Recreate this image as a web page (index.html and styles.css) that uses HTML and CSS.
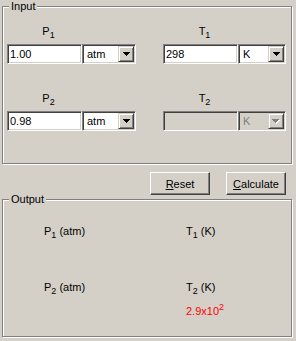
FILE: index.html
```html
<!DOCTYPE html>
<html lang="en">
<head>
    <meta charset="UTF-8">
    <meta name="viewport" content="width=device-width, initial-scale=1.0">
    <title>Gas Law</title>
    <link rel="stylesheet" href="styles.css">
</head>
<body>
    <div class="window">
        <fieldset class="group">
            <legend>Input</legend>
            <div class="input-grid">
                <div class="cell">
                    <div class="label">P<sub>1</sub></div>
                    <div class="controls">
                        <input class="edit" type="text" value="1.00">
                        <div class="combo"><span class="combo-text">atm</span><span class="drop"><svg width="7" height="4" viewBox="0 0 7 4"><path d="M0 0h7v1H0zM1 1h5v1H1zM2 2h3v1H2zM3 3h1v1H3z"/></svg></span></div>
                    </div>
                </div>
                <div class="cell">
                    <div class="label">T<sub>1</sub></div>
                    <div class="controls">
                        <input class="edit" type="text" value="298">
                        <div class="combo narrow"><span class="combo-text">K</span><span class="drop"><svg width="7" height="4" viewBox="0 0 7 4"><path d="M0 0h7v1H0zM1 1h5v1H1zM2 2h3v1H2zM3 3h1v1H3z"/></svg></span></div>
                    </div>
                </div>
                <div class="cell">
                    <div class="label">P<sub>2</sub></div>
                    <div class="controls">
                        <input class="edit" type="text" value="0.98">
                        <div class="combo"><span class="combo-text">atm</span><span class="drop"><svg width="7" height="4" viewBox="0 0 7 4"><path d="M0 0h7v1H0zM1 1h5v1H1zM2 2h3v1H2zM3 3h1v1H3z"/></svg></span></div>
                    </div>
                </div>
                <div class="cell">
                    <div class="label">T<sub>2</sub></div>
                    <div class="controls">
                        <input class="edit disabled" type="text" value="" disabled>
                        <div class="combo narrow disabled"><span class="combo-text">K</span><span class="drop"><svg width="8" height="5" viewBox="0 0 8 5"><path class="shade" d="M1 1h7v1H1zM2 2h5v1H2zM3 3h3v1H3zM4 4h1v1H4z"/><path d="M0 0h7v1H0zM1 1h5v1H1zM2 2h3v1H2zM3 3h1v1H3z"/></svg></span></div>
                    </div>
                </div>
            </div>
        </fieldset>

        <div class="buttons">
            <button class="btn"><u>R</u>eset</button>
            <button class="btn"><u>C</u>alculate</button>
        </div>

        <fieldset class="group">
            <legend>Output</legend>
            <div class="output">
                <div class="out-row">
                    <div class="out-col">P<sub>1</sub> (atm)</div>
                    <div class="out-col">T<sub>1</sub> (K)</div>
                </div>
                <div class="out-row">
                    <div class="out-col">P<sub>2</sub> (atm)</div>
                    <div class="out-col">
                        T<sub>2</sub> (K)
                        <div class="result">2.9x10<sup>2</sup></div>
                    </div>
                </div>
            </div>
        </fieldset>
    </div>
</body>
</html>
```

FILE: styles.css
```css
body {
    margin: 0;
    background-color: #d4d0c8;
    font-family: "Liberation Sans", Arial, sans-serif;
    font-size: 11px;
    line-height: 13px;
    color: #000;
}

.window {
    width: 296px;
    height: 341px;
    padding-left: 2px;
    box-sizing: border-box;
    overflow: hidden;
}

/* group boxes */
.group {
    width: 290px;
    margin: 0;
    padding: 0;
    min-width: 0;
    box-sizing: border-box;
    border: 1px solid #808080;
    box-shadow: inset 1px 1px 0 #fff, 1px 1px 0 #fff;
}

.group legend {
    margin-left: 6px;
    padding: 0 2px;
    line-height: 13px;
    background-color: #d4d0c8;
}

.input-grid {
    display: grid;
    grid-template-columns: 156px 1fr;
    row-gap: 28px;
    padding: 12px 0 32px 4px;
}

.cell {
    display: flex;
    flex-direction: column;
}

.label {
    width: 75px;
    padding-left: 8px;
    box-sizing: border-box;
    text-align: center;
    margin-bottom: 6px;
}

sub {
    font-size: 9px;
    line-height: 0;
    vertical-align: -3px;
}

sup {
    font-size: 9px;
    line-height: 0;
    vertical-align: 5px;
}

.controls {
    display: flex;
}

/* sunken fields */
.edit, .combo {
    height: 20px;
    box-sizing: border-box;
    border: 1px solid;
    border-color: #808080 #fff #fff #808080;
    box-shadow: inset 1px 1px 0 #404040, inset -1px -1px 0 #d4d0c8;
    background-color: #fff;
    font-family: inherit;
    font-size: 11px;
    color: #000;
}

.edit {
    width: 75px;
    margin: 0;
    padding: 0 2px;
    outline: none;
}

.edit.disabled {
    background-color: #d4d0c8;
}

.combo {
    width: 54px;
    padding: 1px;
    display: flex;
    align-items: center;
}

.combo.narrow {
    width: 48px;
}

.combo-text {
    flex: 1;
    padding-left: 3px;
}

.drop {
    width: 16px;
    height: 16px;
    box-sizing: border-box;
    border: 1px solid;
    border-color: #d4d0c8 #404040 #404040 #d4d0c8;
    box-shadow: inset 1px 1px 0 #fff, inset -1px -1px 0 #808080;
    background-color: #d4d0c8;
    display: flex;
    align-items: center;
    justify-content: center;
}

.drop svg {
    display: block;
    fill: #000;
}

.combo.disabled {
    background-color: #d4d0c8;
    color: #808080;
}

.combo.disabled .drop svg {
    fill: #808080;
}

.combo.disabled .drop svg .shade {
    fill: #fff;
}

/* push buttons */
.buttons {
    display: flex;
    justify-content: flex-end;
    gap: 16px;
    padding-right: 10px;
    margin: 8px 0 -2px;
}

.btn {
    width: 60px;
    height: 23px;
    padding: 0;
    font-family: inherit;
    font-size: 11px;
    color: #000;
    background-color: #d4d0c8;
    border: 1px solid;
    border-color: #fff #404040 #404040 #fff;
    box-shadow: inset -1px -1px 0 #808080;
}

/* output */
.output {
    padding: 19px 0 18px 41px;
}

.out-row {
    display: flex;
}

.out-row + .out-row {
    margin-top: 43px;
}

.out-col {
    width: 142px;
    flex-shrink: 0;
}

.result {
    margin-top: 11px;
    color: #ff0000;
}
```
